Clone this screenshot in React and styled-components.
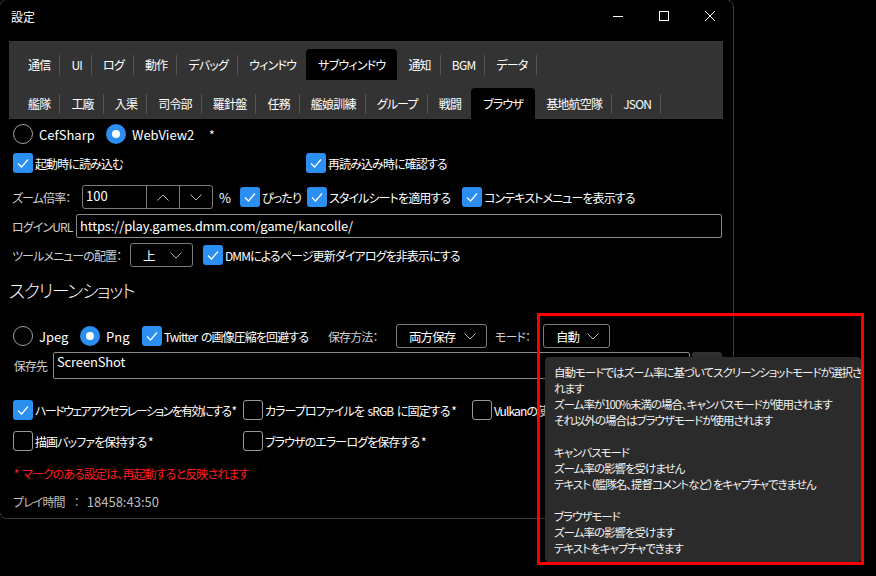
import React from "react";
import styled, { createGlobalStyle } from "styled-components";

const GlobalStyle = createGlobalStyle`
  html, body { margin: 0; padding: 0; background: #000; }
  body {
    font-family: "Noto Sans CJK JP", "Noto Sans", sans-serif;
    font-feature-settings: "palt" 1;
    color: #fff;
  }
`;

const ACCENT = "#2b8ff2";

const Screen = styled.div`
  position: relative;
  width: 876px;
  height: 576px;
  overflow: hidden;
  background: #000;
`;

const Window = styled.div`
  box-sizing: border-box;
  width: 735px;
  height: 520px;
  margin: -1px 0 0 -1px;
  border: 1px solid #3a3a3a;
  border-radius: 8px;
  background: #000;
`;

const TitleBar = styled.div`
  display: flex;
  align-items: center;
  height: 32px;
  padding-left: 11px;
  font-size: 12px;
`;

const Controls = styled.div`
  display: flex;
  margin-left: auto;
`;

const CtrlBtn = styled.div`
  width: 46px;
  height: 32px;
  display: flex;
  align-items: center;
  justify-content: center;
`;

const TabPanel = styled.div`
  margin: 9px 10px 0 9px;
  background: #333;
  padding-left: 8px;
`;

const TabRow = styled.div`
  display: flex;
  align-items: flex-end;
  height: 39px;
`;

const Tab = styled.div`
  position: relative;
  height: 31px;
  padding: 0 ${(p) => (p.$active ? 12 : 10)}px 0 ${(p) => (p.$active ? 12 : 11)}px;
  display: flex;
  align-items: center;
  font-size: 12px;
  letter-spacing: -0.8px;
  background: ${(p) => (p.$active ? "#000" : "transparent")};
  border-radius: 4px 4px 0 0;
  &::after {
    content: "";
    display: ${(p) => (p.$sep ? "block" : "none")};
    position: absolute;
    right: 0;
    top: 6px;
    bottom: 5px;
    width: 1px;
    background: #555;
  }
`;

const Content = styled.div`
  padding: 0 11px 0 12px;
  font-size: 12px;
  letter-spacing: -0.9px;
`;

const Row = styled.div`
  display: flex;
  align-items: center;
  height: ${(p) => p.$h || 24}px;
  margin-top: ${(p) => p.$mt || 0}px;
`;

const Item = styled.div`
  display: flex;
  align-items: center;
  flex: none;
  width: ${(p) => (p.$w ? `${p.$w}px` : "auto")};
  margin-left: ${(p) => p.$ml || 0}px;
  white-space: pre;
  letter-spacing: ${(p) => (p.$tight ? "-1.6px" : "inherit")};
`;

const FieldLabel = styled.span`
  color: #cfcfcf;
`;

const RadioCircle = styled.span`
  box-sizing: border-box;
  width: 20px;
  height: 20px;
  margin-left: 1px;
  border-radius: 50%;
  border: ${(p) => (p.$on ? "none" : "1px solid #a0a0a0")};
  background: ${(p) => (p.$on ? ACCENT : "transparent")};
  display: flex;
  align-items: center;
  justify-content: center;
  margin-right: 6px;
  &::after {
    content: "";
    display: ${(p) => (p.$on ? "block" : "none")};
    width: 8px;
    height: 8px;
    border-radius: 50%;
    background: #fff;
  }
`;

const LatinText = styled.span`
  font-size: 13px;
  letter-spacing: 0;
`;

const Box = styled.span`
  box-sizing: border-box;
  width: 20px;
  height: 20px;
  margin-left: 1px;
  margin-right: 2px;
  border-radius: 3px;
  border: ${(p) => (p.$on ? "none" : "1px solid #9a9a9a")};
  background: ${(p) => (p.$on ? ACCENT : "transparent")};
  display: flex;
  align-items: center;
  justify-content: center;
  flex: none;
`;

const SpinBox = styled.div`
  box-sizing: border-box;
  display: flex;
  width: 131px;
  height: 24px;
  border: 1px solid #7c7c7c;
  border-radius: 3px;
`;

const SpinText = styled.div`
  width: 62px;
  padding-left: 3px;
  font-size: 13px;
  letter-spacing: 0;
  line-height: 20px;
`;

const SpinBtn = styled.div`
  width: 33px;
  border-left: 1px solid #7c7c7c;
  display: flex;
  align-items: center;
  justify-content: center;
`;

const TextInput = styled.div`
  box-sizing: border-box;
  flex: 1;
  height: ${(p) => p.$h || 24}px;
  border: 1px solid #8a8a8a;
  border-radius: 2px;
  padding: 0 3px;
  font-size: 13px;
  letter-spacing: -0.15px;
  line-height: ${(p) => (p.$top ? 18 : 21)}px;
`;

const Select = styled.div`
  box-sizing: border-box;
  width: ${(p) => p.$w}px;
  height: 24px;
  border: 1px solid #7c7c7c;
  border-radius: 3px;
  display: flex;
  align-items: center;
  justify-content: space-between;
  padding: 0 10px 0 12px;
  font-size: 12.5px;
`;

const SideBtn = styled.div`
  width: 30px;
  height: 27px;
  margin-left: 2px;
  background: #333;
  border-radius: 3px;
`;

const Heading = styled.div`
  margin-left: -3px;
  font-size: 18px;
  font-weight: 300;
  letter-spacing: -1.4px;
`;

const Note = styled.div`
  color: #ff1c1c;
  white-space: pre;
`;

const PlayTime = styled.div`
  display: flex;
  align-items: center;
  color: #bdbdbd;
  padding-left: 1px;
`;

const Colon = styled.span`
  margin: 0 8px 0 9px;
`;

const Marker = styled.div`
  position: absolute;
  left: 537px;
  top: 313px;
  width: 327px;
  height: 252px;
  box-sizing: border-box;
  border: 3px solid #ff0000;
  z-index: 3;
  pointer-events: none;
`;

const Tooltip = styled.div`
  position: absolute;
  left: 545px;
  top: 357px;
  width: 316px;
  height: 205px;
  box-sizing: border-box;
  background: #2b2b2b;
  border-radius: 4px;
  box-shadow: 0 2px 6px rgba(0, 0, 0, 0.6);
  padding: 7px 0 0 9px;
  font-size: 11.5px;
  letter-spacing: -1px;
  line-height: 16px;
  color: #f2f2f2;
  z-index: 2;
`;

const TipLine = styled.div`
  white-space: nowrap;
  height: 16px;
`;

const Chevron = ({ up, color = "#b0b0b0" }) => (
  <svg width="12" height="7" viewBox="0 0 12 7">
    <path
      d={up ? "M0.5 6.5 L6 1 L11.5 6.5" : "M0.5 0.5 L6 6 L11.5 0.5"}
      fill="none"
      stroke={color}
      strokeWidth="1"
    />
  </svg>
);

const Check = ({ on, children, w, ml, tight }) => (
  <Item $w={w} $ml={ml} $tight={tight}>
    <Box $on={on}>
      {on && (
        <svg width="20" height="20" viewBox="0 0 20 20">
          <path d="M5 10.5 L8.5 14 L15 6.5" fill="none" stroke="#fff" strokeWidth="1.2" />
        </svg>
      )}
    </Box>
    <span>{children}</span>
  </Item>
);

const Radio = ({ on, children, w }) => (
  <Item $w={w}>
    <RadioCircle $on={on} />
    <LatinText>{children}</LatinText>
  </Item>
);

const tabs1 = ["通信", "UI", "ログ", "動作", "デバッグ", "ウィンドウ", "サブウィンドウ", "通知", "BGM", "データ"];
const tabs2 = ["艦隊", "工廠", "入渠", "司令部", "羅針盤", "任務", "艦娘訓練", "グループ", "戦闘", "ブラウザ", "基地航空隊", "JSON"];

const TabLine = ({ items, active }) => (
  <TabRow>
    {items.map((t, i) => (
      <Tab key={t} $active={i === active} $sep={i !== active && i + 1 !== active}>
        {t}
      </Tab>
    ))}
  </TabRow>
);

const tipLines = [
  "自動モードではズーム率に基づいてスクリーンショットモードが選択さ",
  "れます",
  "ズーム率が100%未満の場合、キャンバスモードが使用されます",
  "それ以外の場合はブラウザモードが使用されます",
  "",
  "キャンバスモード",
  "ズーム率の影響を受けません",
  "テキスト（艦隊名、提督コメントなど）をキャプチャできません",
  "",
  "ブラウザモード",
  "ズーム率の影響を受けます",
  "テキストをキャプチャできます",
];

export default function App() {
  return (
    <Screen>
      <GlobalStyle />
      <Window>
        <TitleBar>
          <span>設定</span>
          <Controls>
            <CtrlBtn>
              <svg width="10" height="10" viewBox="0 0 10 10">
                <path d="M0 5.5 H10" stroke="#fff" strokeWidth="1" />
              </svg>
            </CtrlBtn>
            <CtrlBtn>
              <svg width="10" height="10" viewBox="0 0 10 10">
                <rect x="0.5" y="0.5" width="9" height="9" fill="none" stroke="#fff" strokeWidth="1" />
              </svg>
            </CtrlBtn>
            <CtrlBtn>
              <svg width="10" height="10" viewBox="0 0 10 10">
                <path d="M0 0 L10 10 M10 0 L0 10" stroke="#fff" strokeWidth="1" />
              </svg>
            </CtrlBtn>
          </Controls>
        </TitleBar>

        <TabPanel>
          <TabLine items={tabs1} active={6} />
          <TabLine items={tabs2} active={9} />
        </TabPanel>

        <Content>
          <Row $h={30}>
            <Radio w={93}>CefSharp</Radio>
            <Radio on w={104}>WebView2</Radio>
            <span>*</span>
          </Row>

          <Row $h={28}>
            <Check on w={293}>起動時に読み込む</Check>
            <Check on>再読み込み時に確認する</Check>
          </Row>

          <Row $h={34} $mt={3}>
            <Item $w={70}>
              <FieldLabel>ズーム倍率：</FieldLabel>
            </Item>
            <SpinBox>
              <SpinText>100</SpinText>
              <SpinBtn>
                <Chevron up />
              </SpinBtn>
              <SpinBtn>
                <Chevron />
              </SpinBtn>
            </SpinBox>
            <Item $w={20} $ml={6}>
              <LatinText>%</LatinText>
            </Item>
            <Check on w={67}>ぴったり</Check>
            <Check on w={155}>スタイルシートを適用する</Check>
            <Check on>コンテキストメニューを表示する</Check>
          </Row>

          <Row>
            <Item $w={64}>
              <FieldLabel>ログインURL</FieldLabel>
            </Item>
            <TextInput>https://play.games.dmm.com/game/kancolle/</TextInput>
          </Row>

          <Row $mt={5}>
            <Item $w={118}>
              <FieldLabel>ツールメニューの配置：</FieldLabel>
            </Item>
            <Select $w={63}>
              <span>上</span>
              <Chevron />
            </Select>
            <Check on ml={9}>DMMによるページ更新ダイアログを非表示にする</Check>
          </Row>

          <Row $h={26} $mt={10}>
            <Heading>スクリーンショット</Heading>
          </Row>

          <Row $mt={21}>
            <Radio w={67}>Jpeg</Radio>
            <Radio on w={62}>Png</Radio>
            <Check on w={187}>Twitter  の画像圧縮を回避する</Check>
            <Item $w={68}>
              <FieldLabel>保存方法：</FieldLabel>
            </Item>
            <Select $w={91}>
              <span>両方保存</span>
              <Chevron />
            </Select>
            <Item $w={48} $ml={8}>
              <FieldLabel>モード：</FieldLabel>
            </Item>
            <Select $w={67}>
              <span>自動</span>
              <Chevron />
            </Select>
          </Row>

          <Row $h={27} $mt={4}>
            <Item $w={41}>
              <FieldLabel> 保存先</FieldLabel>
            </Item>
            <TextInput $h={27} $top>ScreenShot</TextInput>
            <SideBtn />
          </Row>

          <Row $h={20} $mt={21}>
            <Check on w={230} tight>ハードウェアアクセラレーションを有効にする *</Check>
            <Check w={229}>カラープロファイルを  sRGB  に固定する *</Check>
            <Check>Vulkanの使用を許可する *</Check>
          </Row>

          <Row $h={20} $mt={11}>
            <Check w={230}>描画バッファを保持する *</Check>
            <Check w={229}>ブラウザのエラーログを保存する *</Check>
          </Row>

          <Row $h={20} $mt={12}>
            <Note> *  マークのある設定は、再起動すると反映されます</Note>
          </Row>

          <Row $h={20} $mt={8}>
            <PlayTime>
              <span>プレイ時間</span>
              <Colon>：</Colon>
              <LatinText>18458:43:50</LatinText>
            </PlayTime>
          </Row>
        </Content>
      </Window>

      <Tooltip>
        {tipLines.map((l, i) => (
          <TipLine key={i}>{l}</TipLine>
        ))}
      </Tooltip>
      <Marker />
    </Screen>
  );
}
